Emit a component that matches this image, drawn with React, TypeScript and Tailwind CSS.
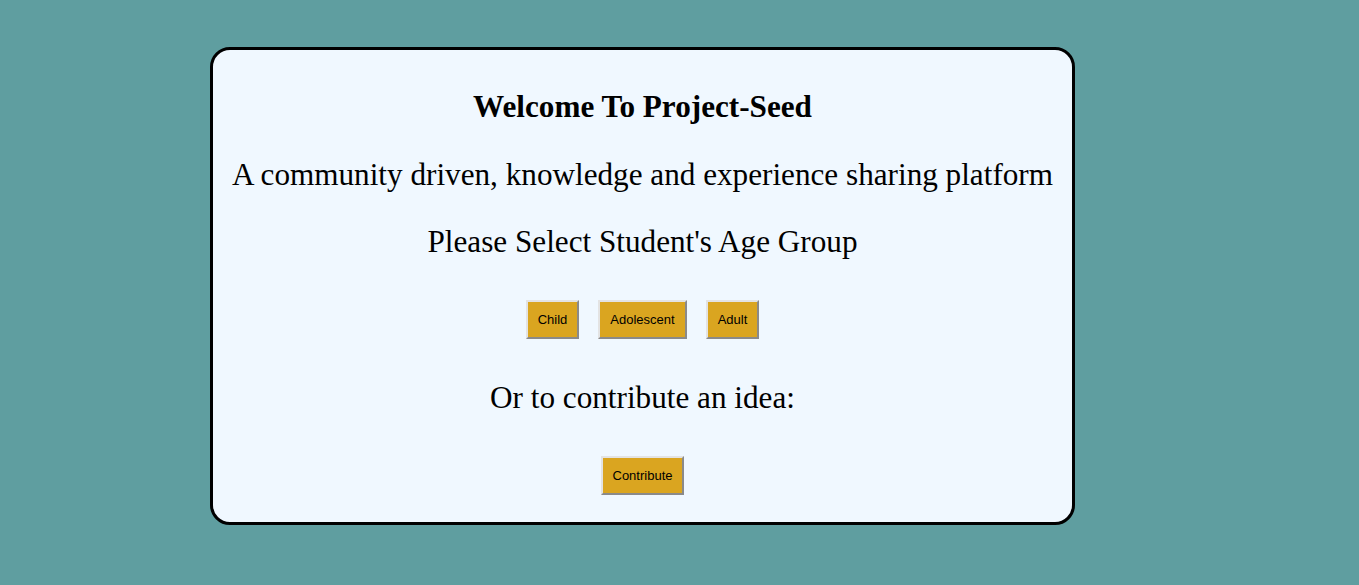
import React from "react";

const AgeButton = ({ label }: { label: string }) => (
  <button className="bg-[#daa520] px-[10px] py-[10px] text-[13px] leading-[15px] text-black border-2 border-t-[#e3e3e3] border-l-[#e3e3e3] border-r-[#8a8a8a] border-b-[#8a8a8a] [font-family:'Liberation_Sans',Arial,sans-serif]">
    {label}
  </button>
);

export default function App() {
  return (
    <div className="min-h-[585px] w-full bg-[#5f9ea0] pt-[47px] [font-family:'Liberation_Serif','Times_New_Roman',serif]">
      <div className="ml-[210px] w-[865px] rounded-[20px] border-[3px] border-black bg-[#f0f8ff] pt-[39px] pb-[27px] flex flex-col items-center text-black">
        <h1 className="text-[31.2px] leading-[36px] font-bold">Welcome To Project-Seed</h1>
        <p className="mt-[32px] text-[31.2px] leading-[36px]">
          A community driven, knowledge and experience sharing platform
        </p>
        <p className="mt-[31px] text-[31.2px] leading-[36px]">Please Select Student's Age Group</p>
        <div className="mt-[40px] flex gap-[19px]">
          <AgeButton label="Child" />
          <AgeButton label="Adolescent" />
          <AgeButton label="Adult" />
        </div>
        <p className="mt-[41px] text-[31.2px] leading-[36px]">Or to contribute an idea:</p>
        <div className="mt-[40px]">
          <AgeButton label="Contribute" />
        </div>
      </div>
    </div>
  );
}
